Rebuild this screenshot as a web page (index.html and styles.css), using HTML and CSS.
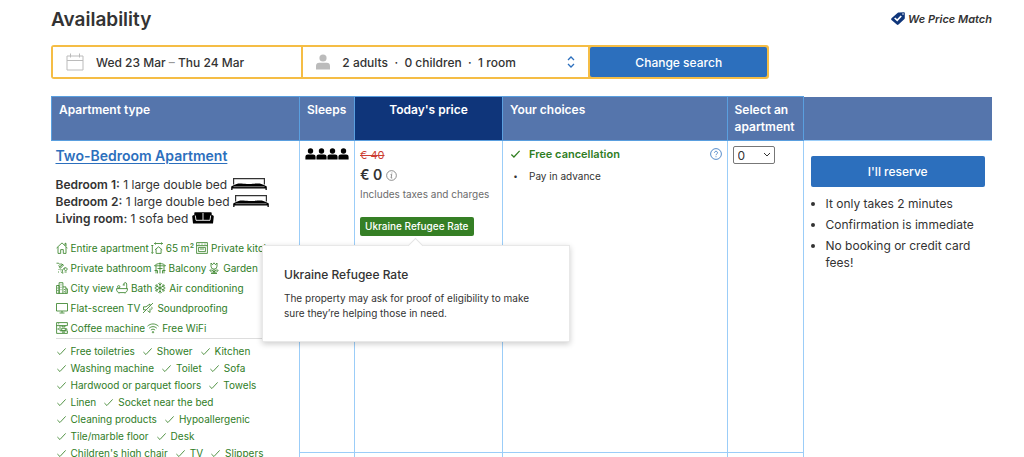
FILE: index.html
```
<!DOCTYPE html>
<html lang="en">
<head>
<meta charset="utf-8">
<title>Availability</title>
<link rel="stylesheet" href="styles.css">
</head>
<body>
<svg class="sprite" aria-hidden="true">
  <symbol id="check" viewBox="0 0 12 12"><path d="M1.5 6.6 4.3 9.3 10.5 2.6"/></symbol>
  <symbol id="house" viewBox="0 0 12 12"><path d="M.6 6 6 .9 11.4 6M2 5v6.4h2.7V7.6h2.6v3.8H10V5M9 3.4V1.3h1V4"/></symbol>
  <symbol id="size" viewBox="0 0 12 12"><path d="M3.5 1.5h8M4.6.4 3.5 1.5l1.1 1.1M10.4.4l1.1 1.1-1.1 1.1M1.3 3v8.4M.3 4l1-1 1 1M.3 10.4l1 1 1-1M4 7.8l3.6-3 3.6 3M5.1 7.3v4.1h5V7.3"/></symbol>
  <symbol id="oven" viewBox="0 0 12 12"><path d="M.6.6h10.8v10.8H.6zM.6 3.6h10.8M2.6 5.4h6.8v4.2H2.6zM2.5 2.1h1M5.5 2.1h1M8.5 2.1h1M4 7h4"/></symbol>
  <symbol id="shower" viewBox="0 0 12 12"><path d="M.5 1.2h2.2l2.4 2.4M3.6 5.2l3-3M2.7 3.2l1.6 3.2L7.5 3 4.6 1.6M3 7v1M5 7v1.5M2.5 9.5v1M7.2 11.2c-1.6-1.7-.5-5 1.8-5.4s3 2 1.2 2.6-2.7-1.5-1-2.4M4.8 9.6l2 1.8M8.5 10h2.2"/></symbol>
  <symbol id="balcony" viewBox="0 0 12 12"><path d="M.5 3.8C2.5.8 9.5.8 11.500 3.800zM6 .5v6M2 3.800v7.600M10 3.800v7.600M3.500 6.500h5M6 6.500v4.900M.5 8.500h3v2.900M11.500 8.500h-3v2.900"/></symbol>
  <symbol id="flower" viewBox="0 0 12 12"><path d="M3 1v3.200a3 3 0 0 0 6 0V1L7.500 2.700 6 .8 4.500 2.700zM6 7.200v4.300M6 10C5 7.800 3 7.800 1.800 8.200 2.300 9.700 4 10.600 6 10c1 .6 3.700.3 4.200-1.800C9 7.800 7 7.800 6 10M3 11.500h6"/></symbol>
  <symbol id="city" viewBox="0 0 12 12"><path d="M.6 11.400V3.500h2.500v7.900M3.100 11.400V.7h3.800v10.700M6.900 4.900h3v6.500M9.900 6.800h1.500v4.600H.4M5 2.400v1M5 4.800v1M5 7.200v1M1.800 5.500v1M1.800 8v1M8.400 7v1M8.400 9.200v1"/></symbol>
  <symbol id="bath" viewBox="0 0 12 12"><path d="M.5 6.600h11c0 2.900-1.400 4-3.200 4H3.700C1.800 10.600.5 9.500.5 6.600zM10.700 6.600V2c0-1.800-2.900-1.800-2.900 0v.8M6.700 3h2.200M3 11.500v-.9M9 11.500v-.9M1.500 4.800a1.200 1.200 0 1 0 2.400 0 1.200 1.200 0 1 0-2.400 0"/></symbol>
  <symbol id="snow" viewBox="0 0 12 12"><path d="M6 .5v11M1.200 3.200l9.600 5.600M10.800 3.200 1.200 8.800M4.300 1.300 6 3l1.700-1.700M4.300 10.700 6 9l1.700 1.700M.8 5.500l2.500-.9-.5-2.500M11.200 6.500l-2.500.9.5 2.500M11.200 5.500l-2.500-.9.5-2.500M.8 6.500l2.500.9-.5 2.500"/></symbol>
  <symbol id="tv" viewBox="0 0 12 12"><path d="M.5 1.500h11v7.500H.5zM6 9v1.800M3.500 11h5"/></symbol>
  <symbol id="mute" viewBox="0 0 12 12"><path d="M1 11 11 1M3.800 7.800H1.500v-3H4L8 2v1.500M8 6.500v4L5.500 8.700M9.500 4.800c.7.800.7 2 0 2.800"/></symbol>
  <symbol id="coffee" viewBox="0 0 12 12"><path d="M.6 11.400V.6h10.800v3H4v5.200h7.400v2.600zM6 3.600v1.200h3V3.600M5.700 6.300h3.600v2.500H5.700zM9.300 6.800h1.500v1.200M.6 3.600H4M2.200 6v2M2.200 1.800h1M6 10.200h3"/></symbol>
  <symbol id="wifi" viewBox="0 0 12 12"><path d="M.5 4.200c3.200-3 7.800-3 11 0M2.200 6.200c2.300-2.100 5.300-2.100 7.600 0M3.900 8.100c1.300-1.200 2.900-1.200 4.200 0M5.300 10.200a.7.700 0 1 0 1.400 0 .7.7 0 1 0-1.400 0"/></symbol>
  <symbol id="person" viewBox="0 0 14 16"><circle cx="7" cy="4" r="3.600"/><path d="M0 15.500V12c0-2 1.300-3.200 3.200-3.200h7.600C12.700 8.800 14 10 14 12v3.500z"/></symbol>
  <symbol id="two-tone-person" viewBox="0 0 11 12"><circle cx="5.500" cy="3" r="2.700"/><path d="M.4 11.500V9c0-1.700 1-2.500 2.500-2.500h5.200c1.500 0 2.500.8 2.500 2.500v2.500z"/></symbol>
  <symbol id="bed" viewBox="0 0 36 12"><path d="M2.600 6.500V.7h30.800v5.800" fill="none" stroke="currentColor" stroke-width="1.200"/><path d="M3 7c2-1 4-1.800 7.500-1.500 3 .2 4 .6 7.500.6s4.500-.4 7.500-.6C29 5.200 31 6 33 7l2.800 1.600V12h-1.300v-1.500h-33V12H.2V8.600z"/><path d="M2.500 8.700h31" stroke="#fff" stroke-width=".5"/></symbol>
  <symbol id="sofa" viewBox="0 0 22 12"><path d="M3.500.3h15c1 0 1.200.5 1.200 1.200V3C21.500 3 22 4 21.700 5.200L21 11.500H1L.3 5.200C0 4 .5 3 2.300 3V1.500C2.300.8 2.500.3 3.500.3z"/><path d="M3.300 3.500 4 8.300h14l.7-4.800M11 1v7" fill="none" stroke="#fff" stroke-width=".9"/></symbol>
</svg>

<main class="page">
  <header class="heading">
    <h1 class="title">Availability</h1>
    <p class="match">
      <svg class="match-icon" viewBox="0 0 14 13" aria-hidden="true"><path d="M6.500 1C7 .5 7.500.4 8 .4L13 .2c.5 0 .8.300.8.800V6c0 .5-.2.900-.6 1.300L7.500 12.500c-.5.500-1.200.5-1.700 0L.5 8C0 7.500 0 6.700.5 6.200z" fill="#0f357a"/><path d="M3.700 6 6.200 8.400l4-4.400" fill="none" stroke="#fff" stroke-width="1.700"/><circle cx="12" cy="2" r=".8" fill="#fff"/></svg>
      We Price Match
    </p>
  </header>

  <form class="search">
    <button type="button" class="field dates">
      <svg class="calendar" viewBox="0 0 18 18" aria-hidden="true"><path d="M1 3h16v14H1zM1 7.500h16M4.500.500v4M13.500.500v4"/></svg>
      <span>Wed 23 Mar <span class="dash">–</span> Thu 24 Mar</span>
    </button>
    <button type="button" class="field guests">
      <svg class="guest-icon" aria-hidden="true"><use href="#person"/></svg>
      <span class="guest-text">2 adults &nbsp;·&nbsp; 0 children &nbsp;·&nbsp; 1 room</span>
      <svg class="sort" viewBox="0 0 8 12" aria-hidden="true"><path d="M1 4 4 1l3 3M1 8l3 3 3-3"/></svg>
    </button>
    <button type="button" class="submit">Change search</button>
  </form>

  <table class="rooms">
    <colgroup><col class="c-type"><col class="c-sleeps"><col class="c-price"><col><col class="c-select"><col class="c-reserve"></colgroup>
    <thead>
      <tr>
        <th scope="col">Apartment type</th>
        <th scope="col">Sleeps</th>
        <th scope="col" class="price-head">Today's price</th>
        <th scope="col">Your choices</th>
        <th scope="col">Select an apartment</th>
        <td class="blank-head"></td>
      </tr>
    </thead>
    <tbody>
      <tr class="offer">
        <td rowspan="2" class="type">
          <a href="#" class="room-link">Two-Bedroom Apartment</a>
          <ul class="beds">
            <li><b>Bedroom 1:</b> 1 large double bed <svg class="bed"><use href="#bed"/></svg></li>
            <li><b>Bedroom 2:</b> 1 large double bed <svg class="bed"><use href="#bed"/></svg></li>
            <li><b>Living room:</b> 1 sofa bed <svg class="sofa"><use href="#sofa"/></svg></li>
          </ul>
          <ul class="highlights">
            <li><svg class="ico"><use href="#house"/></svg>Entire apartment</li>
            <li><svg class="ico"><use href="#size"/></svg>65 m²</li>
            <li><svg class="ico"><use href="#oven"/></svg>Private kitchen</li>
            <li><svg class="ico"><use href="#shower"/></svg>Private bathroom</li>
            <li><svg class="ico"><use href="#balcony"/></svg>Balcony</li>
            <li><svg class="ico"><use href="#flower"/></svg>Garden</li>
            <li><svg class="ico"><use href="#city"/></svg>City view</li>
            <li><svg class="ico"><use href="#bath"/></svg>Bath</li>
            <li><svg class="ico"><use href="#snow"/></svg>Air conditioning</li>
            <li><svg class="ico"><use href="#tv"/></svg>Flat-screen TV</li>
            <li><svg class="ico"><use href="#mute"/></svg>Soundproofing</li>
            <li><svg class="ico"><use href="#coffee"/></svg>Coffee machine</li>
            <li><svg class="ico"><use href="#wifi"/></svg>Free WiFi</li>
          </ul>
          <ul class="facilities">
            <li><svg class="tick"><use href="#check"/></svg>Free toiletries</li>
            <li><svg class="tick"><use href="#check"/></svg>Shower</li>
            <li><svg class="tick"><use href="#check"/></svg>Kitchen</li>
            <li><svg class="tick"><use href="#check"/></svg>Washing machine</li>
            <li><svg class="tick"><use href="#check"/></svg>Toilet</li>
            <li><svg class="tick"><use href="#check"/></svg>Sofa</li>
            <li><svg class="tick"><use href="#check"/></svg>Hardwood or parquet floors</li>
            <li><svg class="tick"><use href="#check"/></svg>Towels</li>
            <li><svg class="tick"><use href="#check"/></svg>Linen</li>
            <li><svg class="tick"><use href="#check"/></svg>Socket near the bed</li>
            <li><svg class="tick"><use href="#check"/></svg>Cleaning products</li>
            <li><svg class="tick"><use href="#check"/></svg>Hypoallergenic</li>
            <li><svg class="tick"><use href="#check"/></svg>Tile/marble floor</li>
            <li><svg class="tick"><use href="#check"/></svg>Desk</li>
            <li><svg class="tick"><use href="#check"/></svg>Children's high chair</li>
            <li><svg class="tick"><use href="#check"/></svg>TV</li>
            <li><svg class="tick"><use href="#check"/></svg>Slippers</li>
          </ul>
        </td>
        <td class="sleeps">
          <div class="people" role="img" aria-label="4 people">
            <svg><use href="#two-tone-person"/></svg><svg><use href="#two-tone-person"/></svg><svg><use href="#two-tone-person"/></svg><svg><use href="#two-tone-person"/></svg>
          </div>
        </td>
        <td class="price">
          <del class="old">€ 40</del>
          <div class="now">€ 0
            <svg class="info" viewBox="0 0 12 12" aria-hidden="true"><circle cx="6" cy="6" r="5.300"/><path d="M5 5h1.300L5.500 8.700h1.300M6.400 2.800v1"/></svg>
          </div>
          <div class="taxes">Includes taxes and charges</div>
          <div class="rate">
            <span class="badge">Ukraine Refugee Rate</span>
            <div class="popover" role="tooltip">
              <h2 class="pop-title">Ukraine Refugee Rate</h2>
              <p class="pop-text">The property may ask for proof of eligibility to make sure they’re helping those in need.</p>
            </div>
          </div>
        </td>
        <td class="choices">
          <div class="choice free"><svg class="choice-mark"><use href="#check"/></svg><span class="choice-text">Free cancellation</span>
            <svg class="help" viewBox="0 0 12 12" aria-hidden="true"><circle cx="6" cy="6" r="5.400"/><path d="M4.500 4.800c0-2 3-2 3 0C7.500 6 6 5.900 6 7.200M6 8.300v.9"/></svg>
          </div>
          <div class="choice"><span class="choice-mark dot">•</span><span class="choice-text">Pay in advance</span></div>
        </td>
        <td class="select">
          <div class="select-wrap">
            <select class="count" aria-label="Select an apartment"><option>0</option><option>1</option></select>
            <svg class="chevron" viewBox="0 0 8 6" aria-hidden="true"><path d="m1 1 3 3 3-3"/></svg>
          </div>
        </td>
        <td rowspan="2" class="reserve">
          <button type="button" class="reserve-btn">I'll reserve</button>
          <ul class="notes">
            <li>It only takes 2 minutes</li>
            <li>Confirmation is immediate</li>
            <li>No booking or credit card fees!</li>
          </ul>
        </td>
      </tr>
      <tr class="next"><td></td><td></td><td></td><td></td></tr>
    </tbody>
  </table>
</main>
</body>
</html>
```

FILE: styles.css
```
* { box-sizing: border-box; }
html { overflow: hidden; }
body {
  margin: 0;
  background: #fff;
  color: #333;
  font-family: Inter, "Liberation Sans", sans-serif;
  font-size: 12px;
}
h1, h2, p, ul { margin: 0; padding: 0; }
ul { list-style: none; }
button { font: inherit; color: inherit; margin: 0; }
.sprite { position: absolute; width: 0; height: 0; }
.page { padding: 6px 32px 0 51px; }

.heading { display: flex; justify-content: space-between; align-items: center; margin-bottom: 12px; }
.title { font-size: 19px; line-height: 27px; font-weight: 600; }
.match { display: flex; align-items: center; gap: 3px; padding-bottom: 2px; font-size: 11px; line-height: 16px; font-weight: 600; font-style: italic; }
.match-icon { width: 14px; height: 13px; }

.search {
  display: grid;
  grid-template-columns: 249fr 286fr 177fr;
  gap: 2px;
  width: 77%;
  max-width: 718px;
  padding: 2px;
  border-radius: 3px;
  background: #f5bd45;
}
.field {
  display: flex;
  align-items: center;
  height: 30px;
  padding: 0 13px;
  border: 0;
  background: #fff;
  font-size: 12px;
  font-weight: 500;
  text-align: left;
}
.dash { color: #999; }
.calendar { width: 18px; height: 18px; margin-right: 12px; fill: none; stroke: #bbb; }
.guest-icon { width: 14px; height: 16px; margin-right: 12px; fill: #bbb; }
.guest-text { flex: 1; }
.sort { width: 8px; height: 12px; fill: none; stroke: #2c6fbd; stroke-width: 1.3; }
.submit { border: 0; border-radius: 2px; background: #2c6fbd; color: #fff; font-size: 12px; font-weight: 500; }

.rooms { width: 100%; margin-top: 17px; border-collapse: collapse; table-layout: fixed; }
.c-type { width: 248px; }
.c-sleeps { width: 55px; }
.c-price { width: 148px; }
.c-select { width: 76px; }
.c-reserve { width: 189px; }
th {
  height: 44px;
  padding: 4px 7px;
  border: 1px solid #5a9fdf;
  background: #5575ac;
  color: #fff;
  font-size: 12px;
  line-height: 17px;
  font-weight: 600;
  text-align: left;
  vertical-align: top;
}
.price-head { background: #0f357a; text-align: center; }
.blank-head { background: #5575ac; }
.rooms tbody td { padding: 0; border: 1px solid #9bcdf8; vertical-align: top; }
.rooms tbody .type { padding: 5px 0 0 4px; border-left: 0; }
.rooms tbody .reserve { padding: 15px 7px 0; border-right: 0; border-bottom: 0; }
.offer { height: 312px; }
.next { height: 40px; }

.room-link { display: block; font-size: 14px; line-height: 19px; font-weight: 600; color: #2c6fbd; text-underline-offset: 2px; }
.beds { margin: 11px 0; font-size: 12px; line-height: 17px; }
.beds b { font-weight: 600; }
.bed { width: 36px; height: 12px; vertical-align: -1px; }
.sofa { width: 22px; height: 12px; vertical-align: -1px; }
.highlights { display: flex; flex-wrap: wrap; column-gap: 2px; font-size: 10px; line-height: 20px; color: #2f7d1f; }
.highlights li { display: flex; align-items: center; gap: 3px; }
.ico { width: 12px; height: 12px; fill: none; stroke: currentColor; stroke-width: 0.8; }
.facilities {
  display: flex;
  flex-wrap: wrap;
  column-gap: 7px;
  margin: 0 8px 0 0;
  padding-top: 4px;
  border-top: 1px solid #ddd;
  font-size: 10px;
  line-height: 17px;
  color: #2f7d1f;
}
.facilities li { display: flex; align-items: center; gap: 4px; }
.tick { width: 11px; height: 11px; fill: none; stroke: currentColor; stroke-width: 0.9; }

.people { display: flex; padding: 7px 5px 0; }
.people svg { width: 11px; height: 12px; fill: #000; }

.rooms tbody .price { padding: 6px 5px 0; }
.old { display: block; font-size: 11px; line-height: 17px; color: #cc3e32; }
.now { display: flex; align-items: center; gap: 4px; font-size: 14px; line-height: 22px; font-weight: 600; }
.info { width: 11px; height: 11px; fill: none; stroke: #666; stroke-width: 0.8; }
.taxes { font-size: 10px; line-height: 16px; color: #6b6b6b; white-space: nowrap; }
.rate { position: relative; width: max-content; margin-top: 15px; }
.badge { display: block; padding: 0 5px; border-radius: 2px; background: #357f25; color: #fff; font-size: 10px; line-height: 19px; font-weight: 500; }
.popover {
  position: absolute;
  top: 28px;
  left: -98px;
  width: 308px;
  padding: 21px 21px 20px;
  border: 1px solid #e8e8e8;
  background: #fff;
  box-shadow: 0 2px 6px rgba(0, 0, 0, 0.2);
}
.popover::before {
  content: "";
  position: absolute;
  top: -6px;
  left: 147px;
  width: 10px;
  height: 10px;
  border: 1px solid #e4e4e4;
  border-width: 1px 0 0 1px;
  background: #fff;
  transform: rotate(45deg);
}
.pop-title { margin-bottom: 8px; font-size: 12px; line-height: 16px; font-weight: 500; }
.pop-text { font-size: 10px; line-height: 15px; }

.rooms tbody .choices { padding: 2px 5px 0 7px; }
.choice { display: flex; align-items: center; font-size: 10px; line-height: 22px; }
.free { color: #2f7d1f; font-size: 11px; font-weight: 600; }
.choice-mark { width: 11px; height: 12px; margin-right: 8px; fill: none; stroke: currentColor; stroke-width: 1.3; }
.dot { line-height: 12px; text-align: center; font-size: 8px; }
.choice-text { flex: 1; }
.help { width: 12px; height: 12px; fill: none; stroke: #2c6fbd; stroke-width: 0.8; }

.rooms tbody .select { padding: 5px 5px 0; }
.select-wrap { display: grid; width: 42px; align-items: center; }
.count {
  grid-area: 1 / 1;
  width: 100%;
  height: 18px;
  padding: 0 4px;
  border: 1px solid #777;
  border-radius: 2px;
  appearance: none;
  background: #fff;
  color: #333;
  font: 12px Inter, sans-serif;
}
.chevron { grid-area: 1 / 1; justify-self: end; width: 8px; height: 6px; margin-right: 4px; fill: none; stroke: #333; pointer-events: none; }

.reserve-btn { display: block; width: 100%; height: 31px; border: 0; border-radius: 2px; background: #2c6fbd; color: #fff; font-size: 12px; font-weight: 500; }
.notes { display: grid; gap: 4px; margin-top: 8px; padding-left: 15px; list-style: disc; font-size: 12px; line-height: 17px; }
```
